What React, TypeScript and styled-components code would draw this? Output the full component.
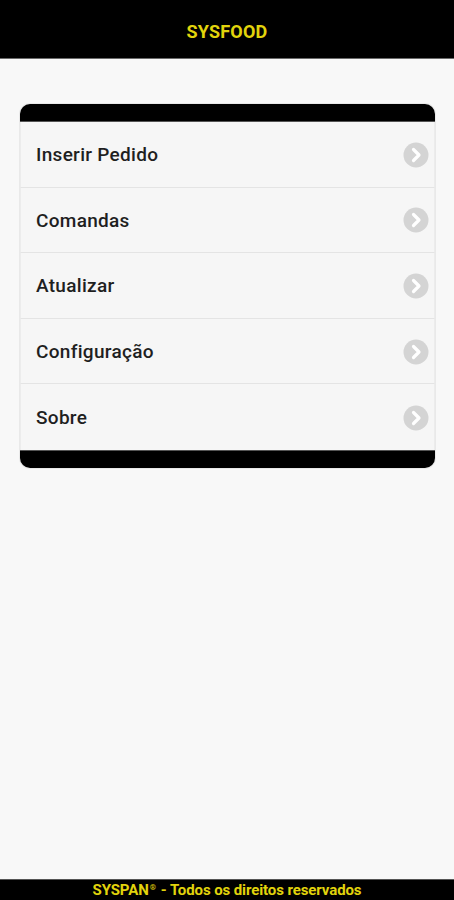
import React from "react";
import styled, { createGlobalStyle } from "styled-components";

const items = ["Inserir Pedido", "Comandas", "Atualizar", "Configuração", "Sobre"];

const GlobalStyle = createGlobalStyle`
  html, body {
    margin: 0;
    padding: 0;
    background: #f8f8f8;
  }
  body {
    font-family: Roboto, "Liberation Sans", sans-serif;
  }
`;

const ChevronIcon: React.FC = () => (
  <svg width="26" height="26" viewBox="0 0 26 26">
    <circle cx="13" cy="13" r="12.5" fill="#d4d4d4" />
    <path d="M10.5 7.5 L16 13 L10.5 18.5" fill="none" stroke="#fff" strokeWidth="3.2" strokeLinecap="round" strokeLinejoin="round" />
  </svg>
);

const App: React.FC = () => {
  return (
    <Page>
      <GlobalStyle />
      <Header>SYSFOOD</Header>
      <Main>
        <Menu>
          <MenuCap $position="top" />
          {items.map((label, i) => (
            <MenuRow key={label} $last={i === items.length - 1}>
              <RowLabel>{label}</RowLabel>
              <ChevronIcon />
            </MenuRow>
          ))}
          <MenuCap $position="bottom" />
        </Menu>
      </Main>
      <Footer>
        SYSPAN<Sup>®</Sup>- Todos os direitos reservados
      </Footer>
    </Page>
  );
};

const Page = styled.div`
  display: flex;
  flex-direction: column;
  height: 900px;
  background: #f8f8f8;
`;

const Header = styled.header`
  height: 59px;
  flex-shrink: 0;
  background: #000;
  border-bottom: 1px solid #6a6a6a;
  display: flex;
  align-items: center;
  justify-content: center;
  color: #e2d40c;
  font-size: 18px;
  font-weight: 700;
  letter-spacing: 0.2px;
  padding-top: 4px;
  box-sizing: border-box;
`;

const Main = styled.main`
  flex: 1;
  padding: 45px 19px 0 20px;
`;

const Menu = styled.div`
  display: flex;
  flex-direction: column;
  border-radius: 10px;
  overflow: hidden;
  background: #f6f6f6;
  box-shadow: 0 0 0 1px #e9e9e9;
`;

const MenuCap = styled.div<{ $position: "top" | "bottom" }>`
  height: 18px;
  box-sizing: border-box;
  background: #000;
  border-${({ $position }) => ($position === "top" ? "bottom" : "top")}: 1px solid #555;
`;

const MenuRow = styled.div<{ $last: boolean }>`
  height: 65.6px;
  box-sizing: border-box;
  display: flex;
  align-items: center;
  justify-content: space-between;
  padding: 1px 5px 0 15px;
  border-bottom: ${({ $last }) => ($last ? "none" : "1px solid #e4e4e4")};
  border-left: 1px solid #ececec;
  border-right: 1px solid #ececec;
`;

const RowLabel = styled.span`
  font-size: 19px;
  font-weight: 500;
  letter-spacing: 0.3px;
  color: #1f1f1f;
`;

const Footer = styled.footer`
  height: 20px;
  flex-shrink: 0;
  background: #000;
  border-top: 1px solid #555;
  color: #e2d40c;
  font-size: 15px;
  font-weight: 700;
  letter-spacing: -0.1px;
  display: flex;
  align-items: center;
  justify-content: center;
`;

const Sup = styled.sup`
  font-size: 8px;
  line-height: 0;
  position: relative;
  top: -2px;
  margin: 0 5px 0 1px;
`;

export default App;
